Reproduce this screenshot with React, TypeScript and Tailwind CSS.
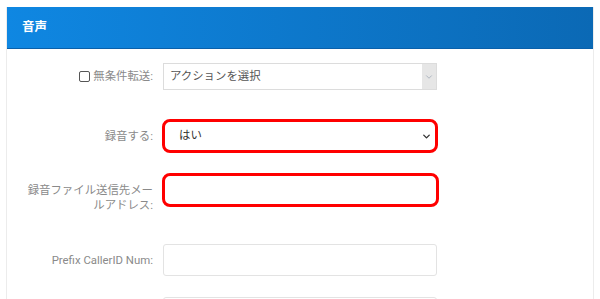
import { ChevronDown } from "lucide-react";

// フォーム設定パネル「音声」
const jp = "font-['Roboto','Noto_Sans_CJK_JP',sans-serif]";

function Label({ children, className = "" }: { children: React.ReactNode; className?: string }) {
  return (
    <div className={`w-[146px] shrink-0 text-right text-[11.4px] leading-[15px] text-[#8a8a8a] ${className}`}>
      {children}
    </div>
  );
}

export default function App() {
  return (
    <div className={`h-[299px] w-[600px] overflow-hidden bg-white ${jp}`}>
      <div className="ml-[6px] mt-[7px] h-[292px] w-[588px] border-x border-[#ececec] bg-white">
        {/* ヘッダー */}
        <div className="flex h-[42px] items-center border-b border-[#0a60aa] bg-gradient-to-r from-[#0f87e2] to-[#0b69b5] pl-[15px] text-[12.5px] font-bold text-white">
          音声
        </div>

        <div className="flex flex-col">
          {/* 無条件転送 */}
          <div className="mt-[14px] flex h-[27px] items-center">
            <Label className="flex items-center justify-end gap-[3px]">
              <span className="inline-block h-[11px] w-[11px] rounded-[2px] border border-[#555]" />
              <span>無条件転送:</span>
            </Label>
            <div className="ml-[10px] flex h-[27px] w-[274px] border border-[#dcdcdc] bg-white">
              <div className="flex flex-1 items-center pl-[6px] text-[11.4px] text-[#555]">アクションを選択</div>
              <div className="flex w-[14px] items-center justify-center bg-[#e6e6e6]">
                <ChevronDown size={10} strokeWidth={1.5} className="text-[#8c98a8]" />
              </div>
            </div>
          </div>

          {/* 録音する */}
          <div className="mt-[29px] flex h-[34px] items-center">
            <Label>録音する:</Label>
            <div className="ml-[9px] flex h-[34px] w-[276px] items-center justify-between rounded-[8px] border-[3px] border-[#ff0000] bg-white pl-[14px] pr-[3px]">
              <span className="text-[11.4px] text-[#333]">はい</span>
              <ChevronDown size={11} strokeWidth={3} className="text-[#333]" />
            </div>
          </div>

          {/* 録音ファイル送信先メールアドレス */}
          <div className="mt-[20px] flex h-[34px] items-start">
            <Label className="pt-[10px]">
              録音ファイル送信先メー
              <br />
              ルアドレス:
            </Label>
            <div className="ml-[9px] h-[34px] w-[277px] rounded-[8px] border-[3px] border-[#ff0000] bg-white" />
          </div>

          {/* Prefix CallerID Num */}
          <div className="mt-[37px] flex h-[32px] items-center">
            <Label>Prefix CallerID Num:</Label>
            <div className="ml-[10px] h-[32px] w-[274px] rounded-[3px] border border-[#e3e3e3] bg-white" />
          </div>

          <div className="mt-[21px] flex h-[32px] items-center">
            <Label> </Label>
            <div className="ml-[10px] h-[32px] w-[274px] rounded-[3px] border border-[#e3e3e3] bg-white" />
          </div>
        </div>
      </div>
    </div>
  );
}
